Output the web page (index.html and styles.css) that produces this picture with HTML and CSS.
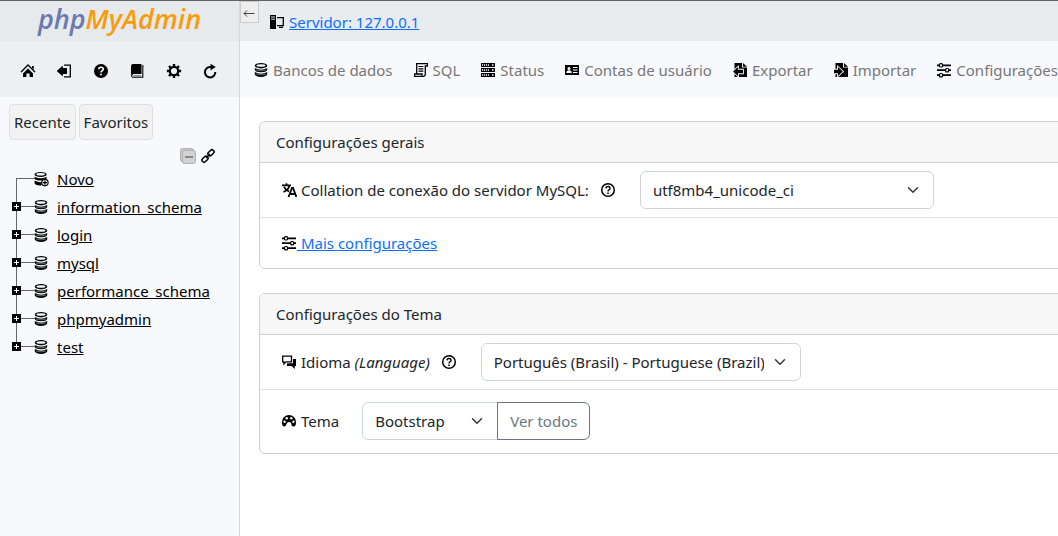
FILE: index.html
```html
<!DOCTYPE html>
<html lang="pt-BR">
<head>
<meta charset="utf-8">
<title>phpMyAdmin</title>
<link rel="stylesheet" href="styles.css">
</head>
<body>
<svg class="sprite" aria-hidden="true">
  <symbol id="i-home" viewBox="0 0 16 16"><path d="M1 9l7-7 7 7" fill="none" stroke="#000" stroke-width="1.400"/><path d="M12 3h1.800v3.500L12 5z"/><path d="M3 10.500 8 5.500l5 5V14H9.600v-3.500H6.400V14H3z"/></symbol>
  <symbol id="i-exit" viewBox="0 0 16 16"><path d="M.8 8l6-5.500V5H11v6H6.800v2.500z"/><path d="M8 2.200h6.300v11.600H8" fill="none" stroke="#000" stroke-width="1.300"/></symbol>
  <symbol id="i-help" viewBox="0 0 16 16"><circle cx="8" cy="8" r="7"/><path d="M5.700 6.300Q5.800 4.200 8 4.200t2.300 1.900Q10.300 7.300 8.900 8 8 8.500 8 9.600" fill="none" stroke="#fff" stroke-width="1.600"/><rect x="7.200" y="10.700" width="1.700" height="1.600" fill="#fff"/></symbol>
  <symbol id="i-book" viewBox="0 0 16 16"><path d="M4 1h8.500v10H3.500Q2 11 2 12.500V3q0-2 2-2z"/><path d="M13.800 2v12.300H4Q2.600 14.300 2.600 12.700T4 11.600" fill="none" stroke="#000" stroke-width="1.100"/><path d="M4.500 12.800H12" stroke="#000" stroke-width=".6"/></symbol>
  <symbol id="i-gear" viewBox="0 0 16 16"><circle cx="8" cy="8" r="4.200" fill="none" stroke="#000" stroke-width="2.200"/><path d="M8 .9v2.600M8 12.500v2.600M.9 8h2.600M12.500 8h2.600M3 3l1.800 1.800M11.200 11.200 13 13M3 13l1.800-1.800M11.200 4.800 13 3" stroke="#000" stroke-width="2.400"/></symbol>
  <symbol id="i-reload" viewBox="0 0 16 16"><path d="M13.300 9A5.200 5.200 0 1 1 8 4h3" fill="none" stroke="#000" stroke-width="2"/><path d="M8.500.8 13.800 4 8.500 7.400z"/></symbol>
  <symbol id="i-db" viewBox="0 0 16 16"><ellipse cx="8" cy="3.700" rx="6.200" ry="2.700"/><ellipse cx="8" cy="3.500" rx="4.600" ry="1.300" fill="#f8f9fc"/><path d="M1.800 6q6.200 3.400 12.400 0v2q-1 2.200-6.200 2.200T1.800 8zM1.800 10q6.200 3.400 12.400 0v2.600Q13 15 8 15t-6.200-2.400z"/><path d="M3 8q5 1.700 10 0M3 12q5 1.700 10 0" fill="none" stroke="#aaa" stroke-width=".6"/></symbol>
  <symbol id="i-dbnew" viewBox="0 0 16 16"><ellipse cx="7.600" cy="3.500" rx="6" ry="2.600"/><ellipse cx="7.600" cy="3.300" rx="4.400" ry="1.200" fill="#f8f9fc"/><path d="M1.600 5.700q6 3.300 12 0v1.900q-1 2-6 2t-6-2zM1.600 9.500q4 2.300 7 1.600V14.400q-6 .3-7-2.200z"/><circle cx="11.900" cy="11.600" r="3.200" fill="#fff" stroke="#000" stroke-width="1.200"/><path d="M11.900 9.500v4.200M9.800 11.600H14" stroke="#000" stroke-width="1.300"/></symbol>
  <symbol id="i-link" viewBox="0 0 16 16"><g fill="none" stroke="#000" stroke-width="1.500"><rect x="-3.300" y="-2" width="6.600" height="4" rx="1.600" transform="translate(11 4.800) rotate(-45)"/><rect x="-3.300" y="-2" width="6.600" height="4" rx="1.600" transform="translate(5 11.200) rotate(-45)"/><path d="M6 10l4-4"/></g></symbol>
  <symbol id="i-collapse" viewBox="0 0 16 16"><rect x=".5" y=".5" width="13" height="13" rx="2" fill="#c9c9c9" stroke="#b0b0b0"/><rect x="2.500" y="2.500" width="13" height="13" rx="2" fill="#d2d2d2" stroke="#b0b0b0"/><path d="M5 9h8" stroke="#777" stroke-width="1.600"/></symbol>
  <symbol id="i-server" viewBox="0 0 16 16"><path d="M1 1h6v14H1z"/><path d="M2 3h4M2 5.200h4" stroke="#fff" stroke-width=".9"/><path d="M8 3.600h6.300v8H8M10 13.400h4" fill="none" stroke="#000" stroke-width="1.300"/></symbol>
  <symbol id="i-sql" viewBox="0 0 16 16"><path d="M3.700 12V1.700h10.700V4h-2.100v8.500q0 1.800-1.800 1.800H1.600V12h7.500v1.500" fill="none" stroke="#000" stroke-width="1.300"/><path d="M5.500 4.500h4.800M5.500 6.800h4.800M5.500 9.100h4.800" stroke="#000" stroke-width="1.200"/></symbol>
  <symbol id="i-status" viewBox="0 0 16 16"><path d="M1 1h14v4H1zM1 6h14v4H1zM1 11h14v4H1z"/><path d="M2 3h7M2 8h7M2 13h7" stroke="#fff" stroke-width="1.300" stroke-dasharray="1.200 .8"/><path d="M12 3h1.500M12 8h1.500M12 13h1.500" stroke="#fff" stroke-width="1.300"/></symbol>
  <symbol id="i-users" viewBox="0 0 16 16"><path d="M1 3h14v10H1z"/><circle cx="5" cy="6.400" r="1.500" fill="#fff"/><path d="M2.300 11q0-2.700 2.700-2.700T7.700 11zM9 5h4.500v1.100H9zM9 7.500h4.500v1.100H9zM9 10h4.500v1.100H9z" fill="#fff"/></symbol>
  <symbol id="i-export" viewBox="0 0 16 16"><path d="M2.500 1H10v4.500h5V15H2.500z"/><path d="M11 1l4 3.700h-4z"/><path d="M1 9.500 6 5v2.700h5v3.600H6V14z" stroke="#f8f9fc" stroke-width="1.800"/><path d="M1 9.500 6 5v2.700h5v3.600H6V14z"/></symbol>
  <symbol id="i-import" viewBox="0 0 16 16"><path d="M2.500 1H10v4.500h5V15H2.500z"/><path d="M11 1l4 3.700h-4z"/><path d="M1 7.700h4V5l4.800 4.500L5 14v-2.700H1z" stroke="#f8f9fc" stroke-width="1.800"/><path d="M1 7.700h4V5l4.800 4.500L5 14v-2.700H1z"/></symbol>
  <symbol id="i-sliders" viewBox="0 0 16 16"><path d="M1 3.300h14M1 8.200h14M1 13.200h14" stroke="#000" stroke-width="1.700"/><g fill="#fff" stroke="#000" stroke-width="1.200"><rect x="3.500" y="1.600" width="3" height="3.400" rx="1"/><rect x="9.700" y="6.500" width="3" height="3.400" rx="1"/><rect x="3.500" y="11.500" width="3" height="3.400" rx="1"/></g></symbol>
  <symbol id="i-lang" viewBox="0 0 16 16"><path d="M1 3.300h9M5.500 1.300v2M2.500 10q5-2 6-6.500M3 4.800Q4.500 8 8 9.600" fill="none" stroke="#000" stroke-width="1.700"/><path d="M7.500 15 11 6h1l3.400 9M9 12h5" fill="none" stroke="#000" stroke-width="1.800"/></symbol>
  <symbol id="i-question" viewBox="0 0 16 16"><circle cx="8" cy="8" r="6.300" fill="none" stroke="#000" stroke-width="1.500"/><path d="M5.900 6.400Q6 4.500 8 4.500t2.100 1.700Q10.100 7.200 8.900 7.900 8 8.400 8 9.500" fill="none" stroke="#000" stroke-width="1.400"/><rect x="7.200" y="10.500" width="1.600" height="1.500"/></symbol>
  <symbol id="i-chat" viewBox="0 0 16 16"><path d="M1.700 2.200h8.800v5.600H5L3 9.900V7.800H1.700z" fill="#fff" stroke="#000" stroke-width="1.300"/><path d="M12 5h3v7h-1.200v3L10.500 12H6V9.300h6z"/></symbol>
  <symbol id="i-palette" viewBox="0 0 16 16"><path d="M1 9a7 7 0 0 1 14 0q0 4.500-2.400 4.500T10.500 11Q10 9 8 9t-2.500 2-2.100 2.500Q1 13.500 1 9z"/><g fill="#fff"><circle cx="3.600" cy="8.700" r="1.200"/><circle cx="5.700" cy="5.300" r="1.200"/><circle cx="10.300" cy="5.300" r="1.200"/><circle cx="12.400" cy="8.700" r="1.200"/></g></symbol>
</svg>

<div class="app">
  <aside class="sidebar">
    <div class="logo"><span class="logo-php">php</span><span class="logo-admin">MyAdmin</span></div>
    <nav class="quick" aria-label="Atalhos">
      <a href="#" aria-label="Início"><svg class="icon"><use href="#i-home"/></svg></a>
      <a href="#" aria-label="Sair"><svg class="icon"><use href="#i-exit"/></svg></a>
      <a href="#" aria-label="Ajuda"><svg class="icon"><use href="#i-help"/></svg></a>
      <a href="#" aria-label="Documentação"><svg class="icon"><use href="#i-book"/></svg></a>
      <a href="#" aria-label="Ajustes"><svg class="icon"><use href="#i-gear"/></svg></a>
      <a href="#" aria-label="Recarregar"><svg class="icon"><use href="#i-reload"/></svg></a>
    </nav>
    <div class="recent">
      <button type="button" class="chip">Recente</button>
      <button type="button" class="chip">Favoritos</button>
    </div>
    <div class="tree-tools">
      <a href="#" aria-label="Recolher"><svg class="icon"><use href="#i-collapse"/></svg></a>
      <a href="#" aria-label="Vincular"><svg class="icon"><use href="#i-link"/></svg></a>
    </div>
    <ul class="tree">
      <li><span class="branch"></span><svg class="icon"><use href="#i-dbnew"/></svg><a href="#">Novo</a></li>
      <li><span class="branch"><button type="button" class="expand" aria-label="Expandir"></button></span><svg class="icon"><use href="#i-db"/></svg><a href="#">information_schema</a></li>
      <li><span class="branch"><button type="button" class="expand" aria-label="Expandir"></button></span><svg class="icon"><use href="#i-db"/></svg><a href="#">login</a></li>
      <li><span class="branch"><button type="button" class="expand" aria-label="Expandir"></button></span><svg class="icon"><use href="#i-db"/></svg><a href="#">mysql</a></li>
      <li><span class="branch"><button type="button" class="expand" aria-label="Expandir"></button></span><svg class="icon"><use href="#i-db"/></svg><a href="#">performance_schema</a></li>
      <li><span class="branch"><button type="button" class="expand" aria-label="Expandir"></button></span><svg class="icon"><use href="#i-db"/></svg><a href="#">phpmyadmin</a></li>
      <li><span class="branch"><button type="button" class="expand" aria-label="Expandir"></button></span><svg class="icon"><use href="#i-db"/></svg><a href="#">test</a></li>
    </ul>
  </aside>

  <div class="page">
    <header class="crumbs">
      <button type="button" class="hide-nav" aria-label="Ocultar painel"><svg class="arrow" viewBox="0 0 12 8"><path d="M11.500 4.500H1M4 1.500l-3 3 3 3" fill="none" stroke="#444"/></svg></button>
      <svg class="icon"><use href="#i-server"/></svg><a href="#">Servidor: 127.0.0.1</a>
    </header>
    <nav class="tabs" aria-label="Servidor">
      <a href="#"><svg class="icon"><use href="#i-db"/></svg>Bancos de dados</a>
      <a href="#"><svg class="icon"><use href="#i-sql"/></svg>SQL</a>
      <a href="#"><svg class="icon"><use href="#i-status"/></svg>Status</a>
      <a href="#"><svg class="icon"><use href="#i-users"/></svg>Contas de usuário</a>
      <a href="#"><svg class="icon"><use href="#i-export"/></svg>Exportar</a>
      <a href="#"><svg class="icon"><use href="#i-import"/></svg>Importar</a>
      <a href="#"><svg class="icon"><use href="#i-sliders"/></svg>Configurações</a>
    </nav>
    <main class="content">
      <section class="card">
        <h2>Configurações gerais</h2>
        <div class="row">
          <label for="collation"><svg class="icon"><use href="#i-lang"/></svg>Collation de conexão do servidor MySQL:</label>
          <a class="hint" href="#" aria-label="Ajuda sobre collation"><svg class="icon"><use href="#i-question"/></svg></a>
          <select id="collation" class="select select-collation"><option>utf8mb4_unicode_ci</option></select>
        </div>
        <div class="row row-link">
          <a class="more" href="#"><svg class="icon"><use href="#i-sliders"/></svg>&nbsp;Mais configurações</a>
        </div>
      </section>
      <section class="card">
        <h2>Configurações do Tema</h2>
        <div class="row">
          <label for="lang"><svg class="icon"><use href="#i-chat"/></svg><span>Idioma <em>(Language)</em></span></label>
          <a class="hint" href="#" aria-label="Ajuda sobre idioma"><svg class="icon"><use href="#i-question"/></svg></a>
          <select id="lang" class="select select-lang"><option>Português (Brasil) - Portuguese (Brazil)</option></select>
        </div>
        <div class="row row-theme">
          <label for="theme"><svg class="icon"><use href="#i-palette"/></svg>Tema</label>
          <div class="group">
            <select id="theme" class="select select-theme"><option>Bootstrap</option></select>
            <button type="button" class="btn">Ver todos</button>
          </div>
        </div>
      </section>
    </main>
  </div>
</div>
</body>
</html>
```

FILE: styles.css
```css
* { box-sizing: border-box; }

body {
  margin: 0;
  font: 15px/24px "Noto Sans", "Open Sans", sans-serif;
  color: #212529;
  background: #fff;
  overflow: hidden;
}

button, select { font: inherit; color: inherit; }
.sprite { position: absolute; width: 0; height: 0; }
.icon { display: block; width: 16px; height: 16px; flex: none; }

.app { display: flex; min-height: 100vh; border-top: 1px solid #645f63; }

.sidebar {
  flex: none;
  width: 240px;
  background: #f8f9fc;
  border-right: 1px solid #d5d7da;
}
.logo {
  height: 40px;
  background: #e7eaed;
  text-align: center;
  font: italic 600 27px/36px "Open Sans", sans-serif;
}
.logo-php { color: #6c78af; }
.logo-admin { color: #f89c0e; }
.quick {
  display: flex;
  justify-content: space-between;
  align-items: center;
  height: 56px;
  padding: 4px 21px 0 20px;
  background: #eeeff2;
}
.recent { display: flex; gap: 3px; padding: 7px 9px 0; }
.chip {
  height: 36px;
  padding: 0 4px;
  background: #f2f2f2;
  border: 1px solid #dedfe1;
  border-radius: 4px;
}
.tree-tools {
  display: flex;
  justify-content: flex-end;
  gap: 4px;
  padding: 8px 23px 1px 0;
}
.tree { list-style: none; margin: 0; padding: 0 0 0 11px; }
.tree li { display: flex; align-items: center; height: 28px; }
.tree a { margin-left: 8px; color: #000; }
.tree .icon { margin-left: 1px; }
.branch {
  position: relative;
  flex: none;
  display: flex;
  align-items: center;
  width: 21px;
  height: 28px;
}
.branch::before {
  content: "";
  position: absolute;
  left: 5px;
  right: -3px;
  top: 13px;
  height: 1px;
  background: #666;
}
.branch::after {
  content: "";
  position: absolute;
  left: 5px;
  top: 0;
  bottom: 0;
  width: 1px;
  background: #666;
}
.tree li:first-child .branch::after { top: 13px; }
.tree li:last-child .branch::after { bottom: 14px; }
.expand {
  position: relative;
  z-index: 1;
  width: 9px;
  height: 9px;
  margin: 0 0 1px 1px;
  padding: 0;
  border: 0;
  background:
    linear-gradient(#fff, #fff) center / 5px 1px no-repeat,
    linear-gradient(#fff, #fff) center / 1px 5px no-repeat,
    #000;
}

.page { flex: 1; min-width: 0; overflow: hidden; }
.crumbs {
  position: relative;
  display: flex;
  align-items: center;
  gap: 4px;
  height: 40px;
  padding: 2px 0 0 29px;
  background: #e9ecef;
}
.crumbs a, .more { color: #0d6efd; }
.hide-nav {
  position: absolute;
  top: 0;
  left: 0;
  display: flex;
  align-items: center;
  width: 19px;
  height: 22px;
  padding: 4px 2px 2px;
  background: #eee;
  border: 1px solid #ccc;
}
.arrow { width: 12px; height: 8px; }
.tabs {
  display: flex;
  align-items: center;
  gap: 20px;
  height: 56px;
  padding: 2px 0 1px 13px;
  background: #f8f9fc;
}
.tabs a {
  display: flex;
  align-items: center;
  gap: 4px;
  color: #777;
  text-decoration: none;
  white-space: nowrap;
}

.content {
  display: grid;
  gap: 24px;
  padding: 24px 0 24px 19px;
  margin-right: -16px;
}
.card { border: 1px solid #cfcfcf; border-radius: 6px; overflow: hidden; }
.card h2 {
  margin: 0;
  padding: 8px 16px;
  font-size: 15px;
  font-weight: 400;
  line-height: 24px;
  background: #f7f7f7;
  border-bottom: 1px solid #cfcfcf;
}
.row { display: flex; align-items: center; padding: 8px 21px; }
.row + .row { border-top: 1px solid #dedfe0; }
.row label { display: flex; align-items: center; gap: 4px; }
.row-link { padding-top: 13px; padding-bottom: 13px; }
.more { display: flex; align-items: center; }
.row-theme { padding-top: 12px; padding-bottom: 13px; }
.hint { margin: 0 24px 0 11px; }

.select {
  appearance: none;
  height: 38px;
  padding: 0 36px 0 12px;
  border: 1px solid #ced4da;
  border-radius: 6px;
  background: #fff url("data:image/svg+xml,%3Csvg xmlns='http://www.w3.org/2000/svg' viewBox='0 0 16 16'%3E%3Cpath fill='none' stroke='%23343a40' stroke-linecap='round' stroke-linejoin='round' stroke-width='2' d='m2 5 6 6 6-6'/%3E%3C/svg%3E") right 14px center / 12px 12px no-repeat;
}
.select-collation { width: 294px; }
.select-lang { width: 320px; }
.group { display: flex; margin-left: 23px; }
.select-theme { width: 136px; border-radius: 6px 0 0 6px; }
.btn {
  height: 38px;
  margin-left: -1px;
  padding: 0 12px;
  color: #6c757d;
  background: #fff;
  border: 1px solid #6c757d;
  border-radius: 0 6px 6px 0;
}
```
